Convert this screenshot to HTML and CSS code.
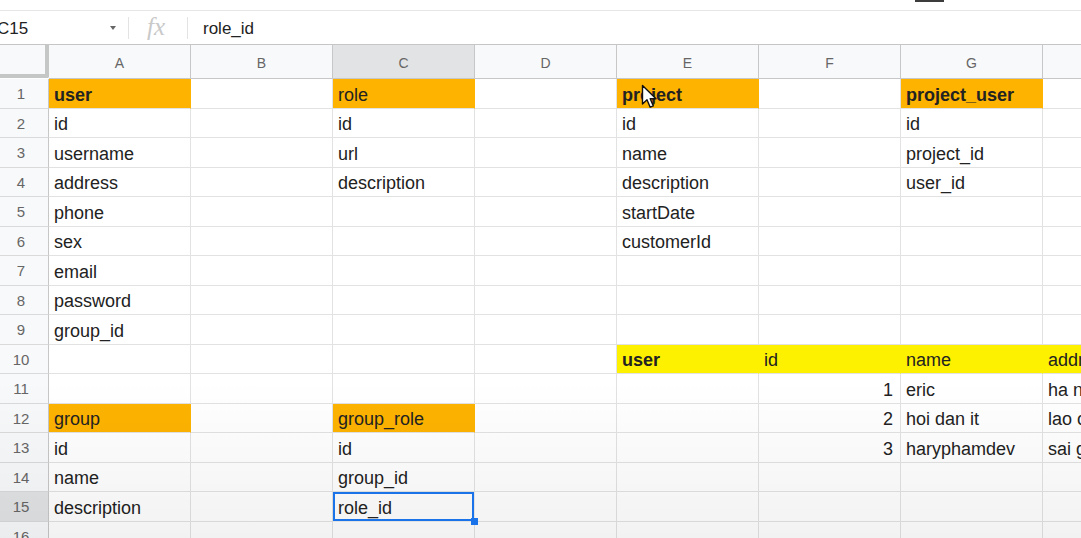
FILE: index.html
```html
<!DOCTYPE html>
<html lang="en">
<head>
    <meta charset="UTF-8">
    <title>Sheet - schema</title>
    <link rel="stylesheet" href="styles.css">
</head>
<body>
    <div class="topstrip"><span class="tab-mark"></span></div>

    <div class="formula-bar">
        <div class="name-box">
            <span class="ref">C15</span>
            <span class="caret"></span>
        </div>
        <div class="fx">fx</div>
        <div class="formula">role_id</div>
    </div>

    <div class="sheet">
        <!-- column headers -->
        <div class="corner"></div>
        <div class="ch">A</div>
        <div class="ch">B</div>
        <div class="ch sel">C</div>
        <div class="ch">D</div>
        <div class="ch">E</div>
        <div class="ch">F</div>
        <div class="ch">G</div>
        <div class="ch"></div>

        <div class="rh">1</div>
        <div class="c orange b">user</div><div class="c"></div>
        <div class="c orange">role</div><div class="c"></div>
        <div class="c orange b">project</div><div class="c"></div>
        <div class="c orange b">project_user</div><div class="c"></div>

        <div class="rh">2</div>
        <div class="c">id</div><div class="c"></div>
        <div class="c">id</div><div class="c"></div>
        <div class="c">id</div><div class="c"></div>
        <div class="c">id</div><div class="c"></div>

        <div class="rh">3</div>
        <div class="c">username</div><div class="c"></div>
        <div class="c">url</div><div class="c"></div>
        <div class="c">name</div><div class="c"></div>
        <div class="c">project_id</div><div class="c"></div>

        <div class="rh">4</div>
        <div class="c">address</div><div class="c"></div>
        <div class="c">description</div><div class="c"></div>
        <div class="c">description</div><div class="c"></div>
        <div class="c">user_id</div><div class="c"></div>

        <div class="rh">5</div>
        <div class="c">phone</div><div class="c"></div>
        <div class="c"></div><div class="c"></div>
        <div class="c">startDate</div><div class="c"></div>
        <div class="c"></div><div class="c"></div>

        <div class="rh">6</div>
        <div class="c">sex</div><div class="c"></div>
        <div class="c"></div><div class="c"></div>
        <div class="c">customerId</div><div class="c"></div>
        <div class="c"></div><div class="c"></div>

        <div class="rh">7</div>
        <div class="c">email</div><div class="c"></div>
        <div class="c"></div><div class="c"></div>
        <div class="c"></div><div class="c"></div>
        <div class="c"></div><div class="c"></div>

        <div class="rh">8</div>
        <div class="c">password</div><div class="c"></div>
        <div class="c"></div><div class="c"></div>
        <div class="c"></div><div class="c"></div>
        <div class="c"></div><div class="c"></div>

        <div class="rh">9</div>
        <div class="c">group_id</div><div class="c"></div>
        <div class="c"></div><div class="c"></div>
        <div class="c"></div><div class="c"></div>
        <div class="c"></div><div class="c"></div>

        <div class="rh">10</div>
        <div class="c"></div><div class="c"></div>
        <div class="c"></div><div class="c"></div>
        <div class="c yellow b">user</div><div class="c yellow">id</div>
        <div class="c yellow">name</div><div class="c yellow">address</div>

        <div class="rh">11</div>
        <div class="c"></div><div class="c"></div>
        <div class="c"></div><div class="c"></div>
        <div class="c"></div><div class="c num">1</div>
        <div class="c">eric</div><div class="c">ha noi</div>

        <div class="rh">12</div>
        <div class="c orange">group</div><div class="c"></div>
        <div class="c orange">group_role</div><div class="c"></div>
        <div class="c"></div><div class="c num">2</div>
        <div class="c">hoi dan it</div><div class="c">lao cai</div>

        <div class="rh">13</div>
        <div class="c">id</div><div class="c"></div>
        <div class="c">id</div><div class="c"></div>
        <div class="c"></div><div class="c num">3</div>
        <div class="c">haryphamdev</div><div class="c">sai gon</div>

        <div class="rh">14</div>
        <div class="c">name</div><div class="c"></div>
        <div class="c">group_id</div><div class="c"></div>
        <div class="c"></div><div class="c"></div>
        <div class="c"></div><div class="c"></div>

        <div class="rh sel">15</div>
        <div class="c">description</div><div class="c"></div>
        <div class="c active">role_id<span class="handle"></span></div><div class="c"></div>
        <div class="c"></div><div class="c"></div>
        <div class="c"></div><div class="c"></div>

        <div class="rh">16</div>
        <div class="c"></div><div class="c"></div>
        <div class="c"></div><div class="c"></div>
        <div class="c"></div><div class="c"></div>
        <div class="c"></div><div class="c"></div>
    </div>

    <svg class="pointer" width="18" height="26" viewBox="0 0 18 26">
        <path d="M1.5 1.5 L1.5 20 L6 15.8 L9.2 23.2 L12.3 21.9 L9.2 14.7 L15 14.7 Z"
              fill="#fff" stroke="#111" stroke-width="1.4" stroke-linejoin="round"/>
    </svg>

    <div class="shade"></div>
</body>
</html>
```

FILE: styles.css
```css
body {
    margin: 0;
    width: 1081px;
    height: 538px;
    overflow: hidden;
    position: relative;
    background: #ffffff;
    color: #222;
    font-family: "Liberation Sans", Arial, sans-serif;
}

.topstrip {
    height: 10px;
    border-bottom: 1px solid #e6e6e6;
    position: relative;
}

.tab-mark {
    position: absolute;
    left: 915px;
    top: 0;
    width: 29px;
    height: 2px;
    background: #3c3c3c;
}

.formula-bar {
    display: flex;
    align-items: center;
    height: 33px;
    border-bottom: 1px solid #c6c6c6;
}

.name-box {
    width: 129px;
    display: flex;
    align-items: center;
    justify-content: space-between;
    border-right: 1px solid #e3e3e3;
    height: 22px;
    box-sizing: border-box;
}

.ref {
    font-size: 17px;
    margin-left: -3px;
    margin-top: 2px;
    color: #222;
}

.caret {
    width: 0;
    height: 0;
    border-left: 3.5px solid transparent;
    border-right: 3.5px solid transparent;
    border-top: 4px solid #666;
    margin-right: 12px;
}

.fx {
    width: 59px;
    height: 22px;
    border-right: 1px solid #e3e3e3;
    box-sizing: border-box;
    padding-left: 18px;
    font-family: "Liberation Serif", serif;
    font-style: italic;
    font-size: 25px;
    line-height: 20px;
    color: #c9c9c9;
}

.formula {
    padding-left: 15px;
    padding-top: 2px;
    font-size: 17px;
}

.sheet {
    display: grid;
    grid-template-columns: 49px repeat(8, 142px);
    grid-template-rows: 34px repeat(16, 29.5px);
}

.corner {
    background: #f8f9fa;
    border-right: 4px solid #c4c7c5;
    border-bottom: 4px solid #c4c7c5;
    margin-bottom: 1px;
    box-sizing: border-box;
    border-bottom-right-radius: 2px;
}

.ch {
    background: #f8f9fa;
    border-right: 1px solid #c7c7c7;
    border-bottom: 1px solid #c7c7c7;
    box-sizing: border-box;
    display: flex;
    align-items: center;
    justify-content: center;
    font-size: 14px;
    color: #666;
    padding-top: 2px;
}

.rh {
    background: #f8f9fa;
    border-right: 1px solid #c7c7c7;
    border-bottom: 1px solid #dadada;
    box-sizing: border-box;
    display: flex;
    align-items: center;
    justify-content: center;
    padding-right: 6px;
    padding-top: 1px;
    font-size: 15px;
    color: #666;
}

.ch.sel,
.rh.sel {
    background: #e1e3e5;
}

.c {
    border-right: 1px solid #e2e2e2;
    border-bottom: 1px solid #e2e2e2;
    box-sizing: border-box;
    display: flex;
    align-items: flex-end;
    padding: 0 0 2px 5px;
    font-size: 18px;
    line-height: 22px;
    white-space: nowrap;
    overflow: hidden;
    position: relative;
}

.c.b {
    font-weight: bold;
}

.c.num {
    justify-content: flex-end;
    padding-right: 7px;
}

.orange {
    background: #fdb300;
    border-right-color: #fdb300;
}

.yellow {
    background: #fdf100;
    border-right-color: #fdf100;
}

.active {
    overflow: visible;
    z-index: 2;
    box-shadow: inset 0 0 0 2px #1a73e8;
    padding-left: 5px;
}

.handle {
    position: absolute;
    right: -4px;
    bottom: -4px;
    width: 7px;
    height: 7px;
    background: #1a73e8;
}

.pointer {
    position: absolute;
    left: 641px;
    top: 84px;
}

.shade {
    position: absolute;
    left: 0;
    right: 0;
    top: 380px;
    bottom: 0;
    background: linear-gradient(to bottom, rgba(0, 0, 0, 0), rgba(0, 0, 0, 0.05));
    pointer-events: none;
}
```
